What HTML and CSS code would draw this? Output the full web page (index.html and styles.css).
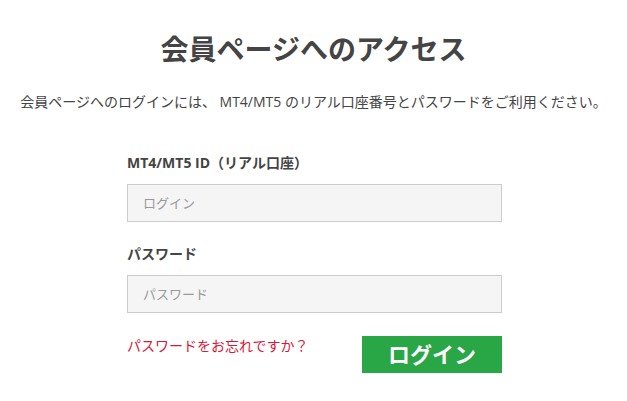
FILE: index.html
```html
<!DOCTYPE html>
<html lang="ja">
<head>
<meta charset="utf-8">
<title>会員ページへのアクセス</title>
<link rel="stylesheet" href="styles.css">
</head>
<body>
<main class="page">
  <h1 class="title">会員ページへのアクセス</h1>
  <p class="lead">会員ページへのログインには、 MT4/MT5 のリアル口座番号とパスワードをご利用ください。</p>
  <form class="form">
    <label class="label" for="login">MT4/MT5 ID（リアル口座）</label>
    <input class="input" id="login" type="text" placeholder="ログイン">
    <label class="label label-pw" for="pw">パスワード</label>
    <input class="input" id="pw" type="password" placeholder="パスワード">
    <div class="actions">
      <a class="forgot" href="#">パスワードをお忘れですか？</a>
      <button class="btn" type="button">ログイン</button>
    </div>
  </form>
</main>
</body>
</html>
```
FILE: styles.css
```css
html, body {
  margin: 0;
  padding: 0;
  background: #fff;
}
body {
  font-family: "Open Sans", "Noto Sans CJK JP", sans-serif;
  color: #444;
}
.page {
  padding-top: 33px;
}
.title {
  margin: 0;
  font-size: 28px;
  line-height: 32px;
  font-weight: bold;
  text-align: center;
  color: #444;
}
.lead {
  margin: 27px 0 0;
  font-size: 14px;
  line-height: 20px;
  text-align: center;
  color: #444;
}
.form {
  width: 375px;
  margin: 41px auto 0;
  padding-left: 2px;
  display: flex;
  flex-direction: column;
}
.label {
  font-size: 14px;
  line-height: 20px;
  font-weight: bold;
  color: #444;
  margin-bottom: 11px;
}
.label-pw {
  margin-top: 22px;
}
.input {
  box-sizing: border-box;
  height: 38px;
  width: 375px;
  border: 1px solid #ccc;
  background: #f5f5f5;
  padding: 0 15px;
  font-family: "Open Sans", "Noto Sans CJK JP", sans-serif;
  font-size: 13px;
  color: #444;
  outline: none;
}
.input::placeholder {
  color: #999;
}
.actions {
  margin-top: 23px;
  display: flex;
  justify-content: space-between;
  align-items: flex-start;
}
.forgot {
  margin-top: 0;
  font-size: 14px;
  line-height: 20px;
  color: #d8173a;
  text-decoration: none;
}
.btn {
  width: 140px;
  height: 37px;
  border: none;
  background: #29a645;
  color: #fff;
  font-family: "Open Sans", "Noto Sans CJK JP", sans-serif;
  font-size: 22px;
  font-weight: bold;
  line-height: 37px;
  padding: 0;
  cursor: pointer;
}
```
